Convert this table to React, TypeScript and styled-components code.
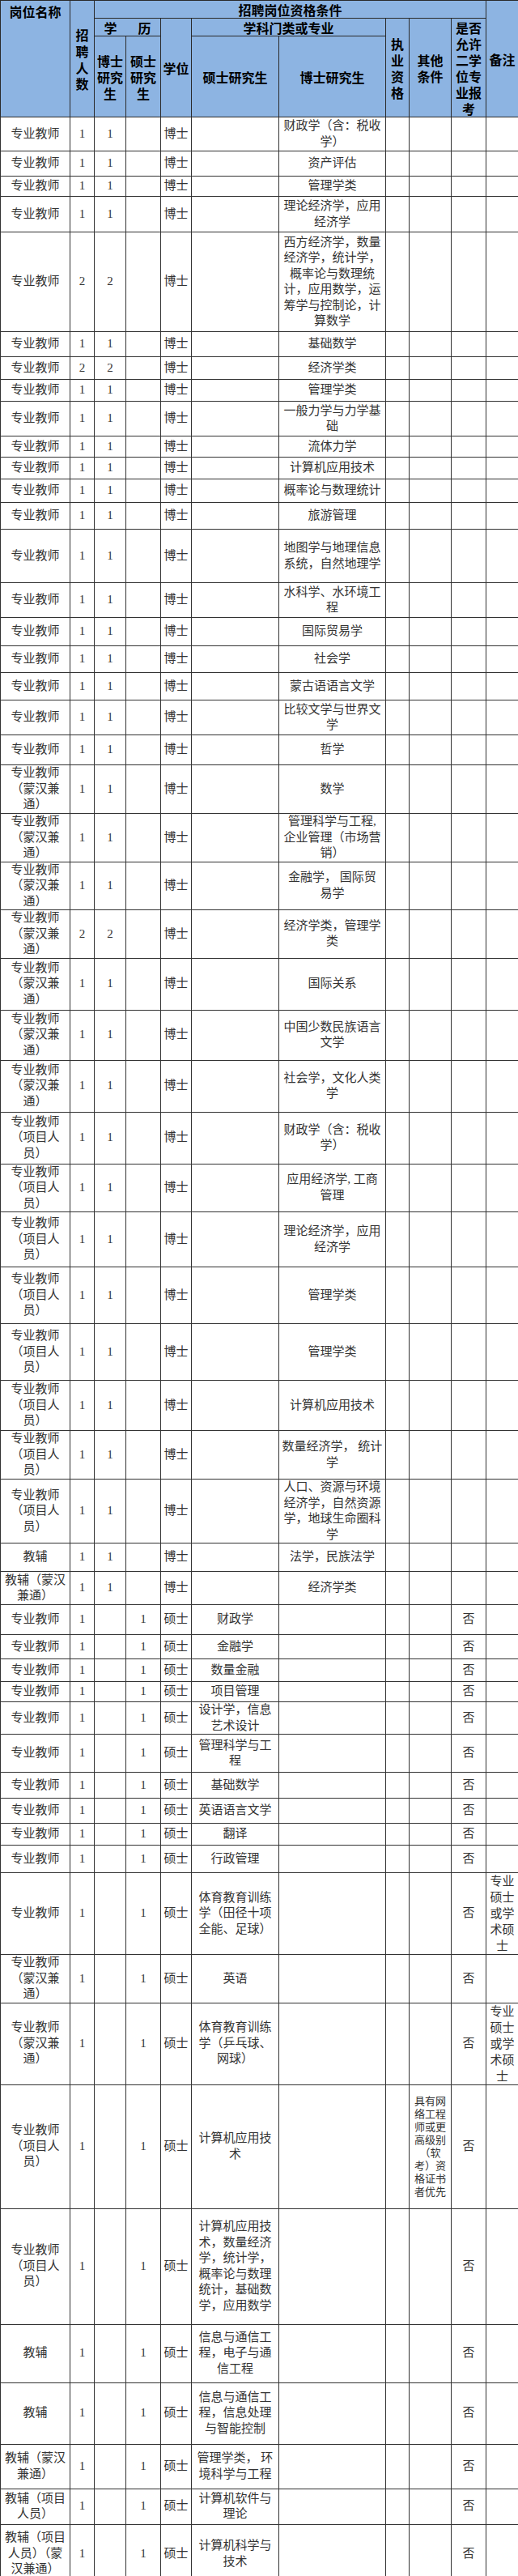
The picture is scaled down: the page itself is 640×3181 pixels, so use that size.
import React from "react";
import styled, { createGlobalStyle } from "styled-components";

const Global = createGlobalStyle`
  html, body { margin: 0; padding: 0; background: #fff; }
  body { font-family: "Liberation Serif", "Noto Sans CJK SC", serif; }
`;

const Table = styled.table`
  width: 640px;
  table-layout: fixed;
  border-collapse: collapse;
  font-family: "Liberation Serif", "Noto Sans CJK SC", serif;
`;

const HeadRow = styled.tr<{ $h: number }>`
  height: ${(p) => p.$h}px;
`;

const Th = styled.th<{ $top?: boolean }>`
  background: #8db4e2;
  color: #000;
  font-family: "Noto Sans CJK SC", sans-serif;
  font-weight: 700;
  font-size: 16px;
  line-height: 20px;
  border: 1px solid #2a2a2a;
  padding: ${(p) => (p.$top ? "3px 2px 0" : "0 2px")};
  text-align: center;
  vertical-align: ${(p) => (p.$top ? "top" : "middle")};
  white-space: pre-line;
  overflow: hidden;
`;

const Spread = styled.span`
  display: flex;
  justify-content: center;
  gap: 26px;
`;

const Row = styled.tr<{ $h: number }>`
  height: ${(p) => p.$h}px;
`;

const Td = styled.td`
  border: 1px solid #333;
  padding: 0 3px;
  color: #333;
  font-size: 15px;
  line-height: 19.5px;
  text-align: center;
  vertical-align: middle;
  white-space: pre-line;
  overflow: hidden;
`;

const OtherTd = styled(Td)`
  font-size: 13px;
  line-height: 16px;
  padding: 0 2px;
`;

const NoteTd = styled(Td)`
  padding: 0 2px;
  line-height: 20px;
`;

type R = {
  h: number;
  name: string;
  n: string;
  phd: string;
  ms: string;
  deg: string;
  msMajor: string;
  phdMajor: string;
  other: string;
  allow: string;
  note: string;
};

const D = (name: string, n: string, major: string, h: number): R => ({
  h,
  name,
  n,
  phd: n,
  ms: "",
  deg: "博士",
  msMajor: "",
  phdMajor: major,
  other: "",
  allow: "",
  note: "",
});

const M = (name: string, major: string, h: number, other = "", note = ""): R => ({
  h,
  name,
  n: "1",
  phd: "",
  ms: "1",
  deg: "硕士",
  msMajor: major,
  phdMajor: "",
  other,
  allow: "否",
  note,
});

const T = "专业教师";
const TM = "专业教师\n（蒙汉兼\n通）";
const TP = "专业教师\n（项目人\n员）";
const F = "教辅";
const FM = "教辅（蒙汉\n兼通）";
const FP = "教辅（项目\n人员）";
const FPM = "教辅（项目\n人员）（蒙\n汉兼通）";
const NOTE = "专业\n硕士\n或学\n术硕\n士";

const rows: R[] = [
  D(T, "1", "财政学（含：税收\n学）", 42),
  D(T, "1", "资产评估", 31),
  D(T, "1", "管理学类", 25),
  D(T, "1", "理论经济学，应用\n经济学", 44),
  D(T, "2", "西方经济学，数量\n经济学，统计学，\n概率论与数理统\n计，应用数学，运\n筹学与控制论，计\n算数学", 123),
  D(T, "1", "基础数学", 31),
  D(T, "2", "经济学类", 28),
  D(T, "1", "管理学类", 27),
  D(T, "1", "一般力学与力学基\n础", 43),
  D(T, "1", "流体力学", 26),
  D(T, "1", "计算机应用技术", 27),
  D(T, "1", "概率论与数理统计", 29),
  D(T, "1", "旅游管理", 33),
  D(T, "1", "地图学与地理信息\n系统，自然地理学", 66),
  D(T, "1", "水科学、水环境工\n程", 43),
  D(T, "1", "国际贸易学", 35),
  D(T, "1", "社会学", 33),
  D(T, "1", "蒙古语语言文学", 34),
  D(T, "1", "比较文学与世界文\n学", 43),
  D(T, "1", "哲学", 37),
  D(TM, "1", "数学", 60),
  D(TM, "1", "管理科学与工程,\n企业管理（市场营\n销）", 59),
  D(TM, "1", "金融学， 国际贸\n易学", 59),
  D(TM, "2", "经济学类，管理学\n类", 58),
  D(TM, "1", "国际关系", 64),
  D(TM, "1", "中国少数民族语言\n文学", 62),
  D(TM, "1", "社会学，文化人类\n学", 64),
  D(TP, "1", "财政学（含：税收\n学）", 64),
  D(TP, "1", "应用经济学, 工商\n管理", 59),
  D(TP, "1", "理论经济学，应用\n经济学", 68),
  D(TP, "1", "管理学类", 70),
  D(TP, "1", "管理学类", 70),
  D(TP, "1", "计算机应用技术", 62),
  D(TP, "1", "数量经济学， 统计\n学", 60),
  D(TP, "1", "人口、资源与环境\n经济学，自然资源\n学，地球生命圈科\n学", 78),
  D(F, "1", "法学，民族法学", 35),
  D(FM, "1", "经济学类", 41),
  M(T, "财政学", 37),
  M(T, "金融学", 30),
  M(T, "数量金融", 28),
  M(T, "项目管理", 25),
  M(T, "设计学，信息\n艺术设计", 39),
  M(T, "管理科学与工\n程", 47),
  M(T, "基础数学", 32),
  M(T, "英语语言文学", 31),
  M(T, "翻译", 27),
  M(T, "行政管理", 34),
  M(T, "体育教育训练\n学（田径十项\n全能、足球）", 100, "", NOTE),
  M(TM, "英语", 58),
  M(TM, "体育教育训练\n学（乒乓球、\n网球）", 99, "", NOTE),
  M(TP, "计算机应用技\n术", 153, "具有网\n络工程\n师或更\n高级别\n（软\n考）资\n格证书\n者优先"),
  M(TP, "计算机应用技\n术，数量经济\n学，统计学，\n概率论与数理\n统计，基础数\n学，应用数学", 143),
  M(F, "信息与通信工\n程，电子与通\n信工程", 72),
  M(F, "信息与通信工\n程，信息处理\n与智能控制", 76),
  M(FM, "管理学类， 环\n境科学与工程", 55),
  M(FP, "计算机软件与\n理论", 44),
  M(FPM, "计算机科学与\n技术", 73),
];

const widths = [86, 30, 39, 43, 38, 108, 132, 29, 52, 43, 40];

export default function App() {
  return (
    <>
      <Global />
      <Table>
        <colgroup>
          {widths.map((w, i) => (
            <col key={i} style={{ width: w }} />
          ))}
        </colgroup>
        <thead>
          <HeadRow $h={22}>
            <Th rowSpan={3} $top>
              岗位名称
            </Th>
            <Th rowSpan={3}>{"招\n聘\n人\n数"}</Th>
            <Th colSpan={8}>招聘岗位资格条件</Th>
            <Th rowSpan={3}>备注</Th>
          </HeadRow>
          <HeadRow $h={22}>
            <Th colSpan={2}>
              <Spread>
                <span>学</span>
                <span>历</span>
              </Spread>
            </Th>
            <Th rowSpan={2}>学位</Th>
            <Th colSpan={2}>学科门类或专业</Th>
            <Th rowSpan={2}>{"执\n业\n资\n格"}</Th>
            <Th rowSpan={2}>{"其他\n条件"}</Th>
            <Th rowSpan={2}>{"是否\n允许\n二学\n位专\n业报\n考"}</Th>
          </HeadRow>
          <HeadRow $h={100}>
            <Th>{"博士\n研究\n生"}</Th>
            <Th>{"硕士\n研究\n生"}</Th>
            <Th>硕士研究生</Th>
            <Th>博士研究生</Th>
          </HeadRow>
        </thead>
        <tbody>
          {rows.map((r, i) => (
            <Row key={i} $h={r.h}>
              <Td>{r.name}</Td>
              <Td>{r.n}</Td>
              <Td>{r.phd}</Td>
              <Td>{r.ms}</Td>
              <Td>{r.deg}</Td>
              <Td>{r.msMajor}</Td>
              <Td>{r.phdMajor}</Td>
              <Td />
              <OtherTd>{r.other}</OtherTd>
              <Td>{r.allow}</Td>
              <NoteTd>{r.note}</NoteTd>
            </Row>
          ))}
        </tbody>
      </Table>
    </>
  );
}
